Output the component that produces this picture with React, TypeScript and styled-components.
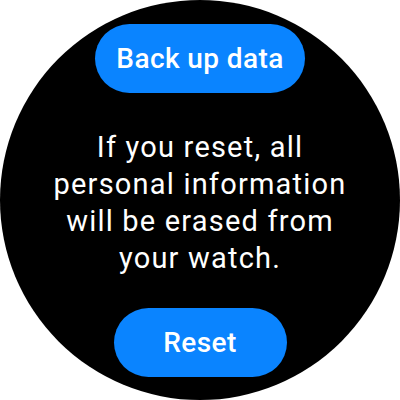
import React from 'react';
import styled, { createGlobalStyle } from 'styled-components';

const GlobalStyle = createGlobalStyle`
    html, body {
        margin: 0;
        padding: 0;
        background: #ffffff;
    }
    body {
        font-family: Roboto, 'Noto Sans', 'Liberation Sans', sans-serif;
    }
`;

const WatchFace = styled.div`
    width: 400px;
    height: 400px;
    border-radius: 50%;
    background: #000000;
    overflow: hidden;
    display: flex;
    flex-direction: column;
    align-items: center;
    box-sizing: border-box;
    padding-top: 24px;
`;

const PillButton = styled.button<{ $width: number }>`
    width: ${(p) => p.$width}px;
    height: 69px;
    flex-shrink: 0;
    border: none;
    border-radius: 35px;
    background: #0a84ff;
    color: #ffffff;
    font-family: Roboto, 'Noto Sans', 'Liberation Sans', sans-serif;
    font-size: 28px;
    font-weight: 500;
    letter-spacing: 0.4px;
    padding: 0;
    cursor: pointer;
`;

const Message = styled.p`
    width: 306px;
    margin: 36px 0 31px;
    color: #ffffff;
    font-size: 29px;
    line-height: 37px;
    letter-spacing: 1.2px;
    text-align: center;
    font-weight: 400;
`;

const App: React.FC = () => {
    return (
        <>
            <GlobalStyle />
            <WatchFace>
                <PillButton $width={210}>Back up data</PillButton>
                <Message>If you reset, all personal information will be erased from your watch.</Message>
                <PillButton $width={173}>Reset</PillButton>
            </WatchFace>
        </>
    );
};

export default App;
